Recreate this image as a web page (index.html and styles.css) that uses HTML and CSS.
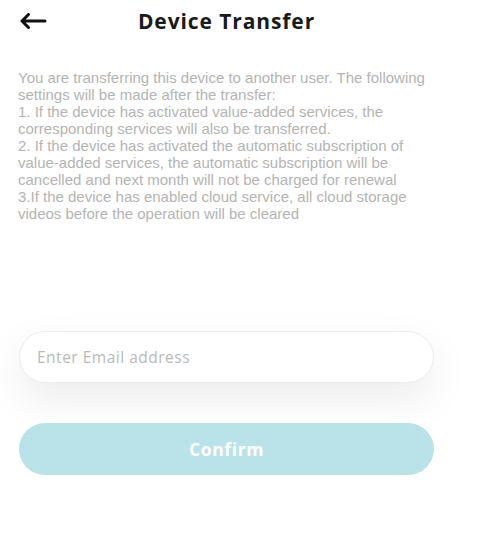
FILE: index.html
```html
<!DOCTYPE html>
<html lang="en">
<head>
  <meta charset="UTF-8" />
  <meta name="viewport" content="width=device-width, initial-scale=1.0"/>
  <title>Device Transfer</title>
  <link rel="stylesheet" href="styles.css">
</head>
<body>

<div class="page">

  <header class="topbar">
    <button class="back-btn" aria-label="Back">
      <svg width="28" height="16" viewBox="0 0 28 16">
        <path d="M26 8H3M9.5 1.5L3 8l6.5 6.5" fill="none" stroke="#111" stroke-width="3" stroke-linecap="round" stroke-linejoin="round"/>
      </svg>
    </button>
    <h1>Device Transfer</h1>
    <span></span>
  </header>

  <p class="notice">
    You are transferring this device to another user. The following<br>
    settings will be made after the transfer:<br>
    1. If the device has activated value-added services, the<br>
    corresponding services will also be transferred.<br>
    2. If the device has activated the automatic subscription of<br>
    value-added services, the automatic subscription will be<br>
    cancelled and next month will not be charged for renewal<br>
    3.If the device has enabled cloud service, all cloud storage<br>
    videos before the operation will be cleared
  </p>

  <div class="transfer-form">
    <input type="email" class="email-input" placeholder="Enter Email address" />
    <button class="confirm-btn">Confirm</button>
  </div>

</div>

</body>
</html>
```

FILE: styles.css
```css
body {
  margin: 0;
  padding: 0;
  background: #fff;
  font-family: 'Liberation Sans', Arial, sans-serif;
}

.page {
  width: 453px;
}

.topbar {
  display: grid;
  grid-template-columns: 1fr auto 1fr;
  align-items: center;
  height: 42px;
  padding: 0 19px;
}

.back-btn {
  background: none;
  border: none;
  padding: 0;
  width: 28px;
  height: 16px;
  display: flex;
  cursor: pointer;
}

.topbar h1 {
  margin: 0;
  font-family: 'Open Sans', sans-serif;
  font-weight: 700;
  font-size: 21px;
  letter-spacing: 0.9px;
  color: #1a1a1a;
}

.notice {
  margin: 27px 0 0;
  padding: 0 18px;
  font-size: 15px;
  line-height: 17px;
  color: #b4b4b4;
  white-space: nowrap;
}

.transfer-form {
  display: flex;
  flex-direction: column;
  gap: 40px;
  padding: 109px 19px 0;
}

.email-input {
  box-sizing: border-box;
  height: 52px;
  width: 100%;
  border: 1px solid #ececec;
  border-radius: 26px;
  padding: 0 17px;
  font-family: 'Open Sans', sans-serif;
  font-size: 15.5px;
  letter-spacing: 0.5px;
  color: #333;
  background: #fff;
  outline: none;
  box-shadow: 0 16px 40px rgba(0,0,0,0.08);
}

.email-input::placeholder {
  color: #b9b9b9;
}

.confirm-btn {
  height: 52px;
  border: none;
  border-radius: 26px;
  background: #b9e3e8;
  color: #fff;
  font-family: 'Open Sans', sans-serif;
  font-weight: 700;
  font-size: 17.5px;
  letter-spacing: 0.6px;
  cursor: pointer;
}
```
